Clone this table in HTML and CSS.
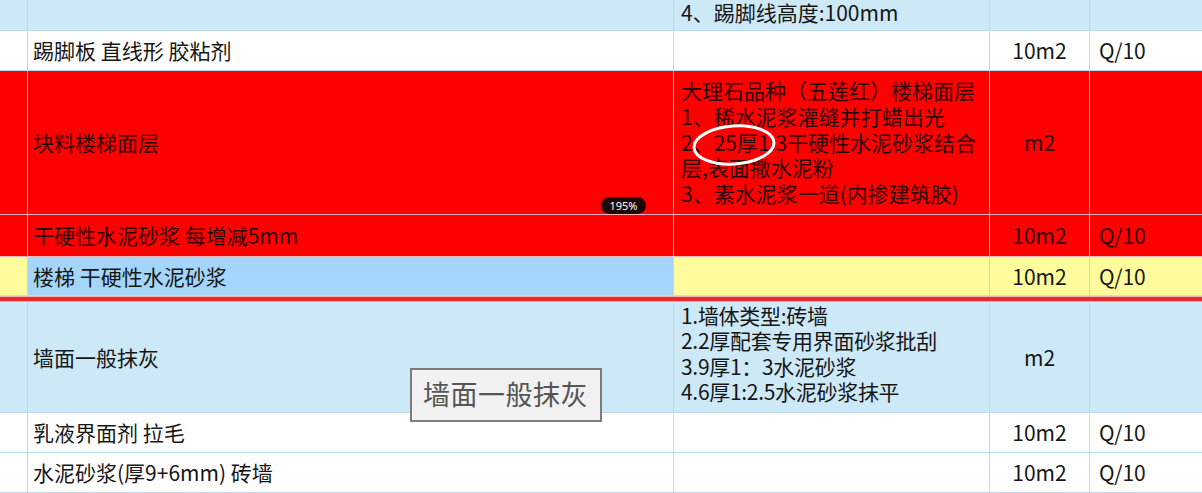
FILE: index.html
```html
<!DOCTYPE html>
<html lang="zh">
<head>
<meta charset="utf-8">
<title>清单</title>
<link rel="stylesheet" href="styles.css">
</head>
<body>
<div class="sheet">
  <div class="row row-a blue">
    <div class="cell c0"></div>
    <div class="cell c1"></div>
    <div class="cell c2 top">4、踢脚线高度:100mm</div>
    <div class="cell c3"></div>
    <div class="cell c4"></div>
  </div>
  <div class="row row-b white">
    <div class="cell c0"></div>
    <div class="cell c1">踢脚板 直线形 胶粘剂</div>
    <div class="cell c2"></div>
    <div class="cell c3">10m2</div>
    <div class="cell c4">Q/10</div>
  </div>
  <div class="row row-c red">
    <div class="cell c0"></div>
    <div class="cell c1">块料楼梯面层</div>
    <div class="cell c2">
      <div class="desc">
        <div class="line">大理石品种（五莲红）楼梯面层</div>
        <div class="line">1、稀水泥浆灌缝并打蜡出光</div>
        <div class="line">2、25厚1:3干硬性水泥砂浆结合</div>
        <div class="line">层,表面撒水泥粉</div>
        <div class="line">3、素水泥浆一道(内掺建筑胶)</div>
      </div>
    </div>
    <div class="cell c3">m2</div>
    <div class="cell c4"></div>
  </div>
  <div class="row row-d red">
    <div class="cell c0"></div>
    <div class="cell c1">干硬性水泥砂浆 每增减5mm</div>
    <div class="cell c2"></div>
    <div class="cell c3">10m2</div>
    <div class="cell c4">Q/10</div>
  </div>
  <div class="row row-e yellow">
    <div class="cell c0"></div>
    <div class="cell c1 sel">楼梯 干硬性水泥砂浆</div>
    <div class="cell c2"></div>
    <div class="cell c3">10m2</div>
    <div class="cell c4">Q/10</div>
  </div>
  <div class="separator"></div>
  <div class="row row-f blue">
    <div class="cell c0"></div>
    <div class="cell c1">墙面一般抹灰</div>
    <div class="cell c2 start">
      <div class="desc narrow">
        <div class="line">1.墙体类型:砖墙</div>
        <div class="line">2.2厚配套专用界面砂浆批刮</div>
        <div class="line">3.9厚1：3水泥砂浆</div>
        <div class="line">4.6厚1:2.5水泥砂浆抹平</div>
      </div>
    </div>
    <div class="cell c3">m2</div>
    <div class="cell c4"></div>
  </div>
  <div class="row row-g white">
    <div class="cell c0"></div>
    <div class="cell c1">乳液界面剂 拉毛</div>
    <div class="cell c2"></div>
    <div class="cell c3">10m2</div>
    <div class="cell c4">Q/10</div>
  </div>
  <div class="row row-h white">
    <div class="cell c0"></div>
    <div class="cell c1">水泥砂浆(厚9+6mm) 砖墙</div>
    <div class="cell c2"></div>
    <div class="cell c3">10m2</div>
    <div class="cell c4">Q/10</div>
  </div>

  <div class="zoom-badge">195%</div>
  <svg class="mark" width="100" height="60" viewBox="0 0 100 60">
    <ellipse cx="50" cy="30" rx="40" ry="19" transform="rotate(-4 50 30)" fill="none" stroke="#ffffff" stroke-width="3"/>
  </svg>
  <div class="tooltip">墙面一般抹灰</div>
</div>
</body>
</html>
```
FILE: styles.css
```css
* { box-sizing: border-box; }
html, body { margin: 0; padding: 0; }
body {
  width: 1202px;
  height: 493px;
  overflow: hidden;
  background: #ffffff;
  font-family: "Noto Sans CJK SC", "Noto Sans", sans-serif;
  font-size: 21px;
  color: #161616;
}
.sheet { position: relative; width: 1202px; }

.row {
  display: grid;
  grid-template-columns: 28px 646px 316px 100px 1fr;
  border-bottom: 1px solid #b9daf0;
}
.cell {
  border-right: 1px solid #b9daf0;
  display: flex;
  align-items: center;
  white-space: nowrap;
  line-height: 25px;
}
.cell:last-child { border-right: none; }
.c1 { padding-left: 5px; }
.c2 { padding-left: 7px; }
.c3 { justify-content: center; }
.c4 { padding-left: 9px; }
.c2.top { align-items: flex-start; line-height: 24px; }
.c2.start { align-items: flex-start; padding-top: 1px; }

.desc { display: flex; flex-direction: column; }
.desc .line { height: 25.7px; line-height: 25.7px; }
.desc.narrow .line { height: 25.3px; line-height: 25.3px; letter-spacing: -0.3px; }

.row-a { height: 31px; }
.row-b { height: 40px; }
.row-c { height: 144px; }
.row-d { height: 42px; }
.row-e { height: 39px; }
.row-f { height: 111px; }
.row-g { height: 40px; }
.row-h { height: 40px; }

.blue { background: #cde8f6; }
.white { background: #ffffff; }
.red { background: #ff0000; color: #2c0000; border-bottom-color: #f6b8b8; }
.red .cell { border-right-color: #f6b8b8; }
.yellow { background: #fefc9c; border-bottom-color: #c9dcec; }
.yellow .cell { border-right-color: #bcd8ee; }
.yellow .sel { background: #a4d5fb; }

.separator {
  height: 6px;
  border-top: 1px solid #f5b0b0;
  border-bottom: 1px solid #f0a6a6;
  background: #e52b2b;
}

.zoom-badge {
  position: absolute;
  left: 601px;
  top: 197px;
  width: 45px;
  height: 17px;
  border-radius: 9px;
  background: #1d0707;
  color: #ffffff;
  font-family: "Noto Sans", sans-serif;
  font-size: 11px;
  line-height: 17px;
  text-align: center;
}
.mark {
  position: absolute;
  left: 684px;
  top: 115px;
}
.tooltip {
  position: absolute;
  left: 410px;
  top: 368px;
  width: 192px;
  height: 54px;
  border: 2px solid #7c7c7c;
  background: #f1f1f1;
  color: #555555;
  font-size: 27px;
  line-height: 48px;
  padding-left: 11px;
  white-space: nowrap;
  letter-spacing: 0.5px;
}
```
